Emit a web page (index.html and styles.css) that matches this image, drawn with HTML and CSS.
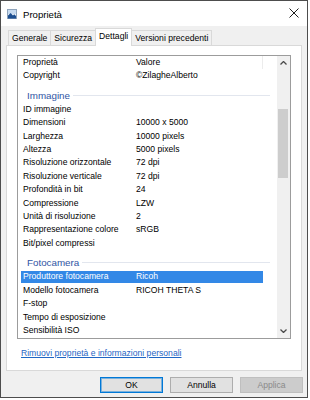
FILE: index.html
```
<!DOCTYPE html>
<html lang="it">
<head>
    <meta charset="UTF-8">
    <title>Proprietà</title>
    <link rel="stylesheet" href="styles.css">
</head>
<body>
    <div class="window">
        <div class="titlebar">
            <svg class="app-icon" width="10" height="10" viewBox="0 0 10 10">
                <rect x="0.5" y="0.5" width="9" height="9" fill="#f4f8fc" stroke="#8ea3bb"/>
                <rect x="1" y="1" width="8" height="4" fill="#c6daf0"/>
                <path d="M1 9.5 L1 6.5 L3.6 4 L6 6.4 L7.2 5.3 L9 7 L9 9.5 Z" fill="#1d4f91"/>
            </svg>
            <span class="title">Proprietà</span>
            <svg class="close" width="10" height="10" viewBox="0 0 10 10">
                <path d="M0.5 0.5 L9.5 9.5 M9.5 0.5 L0.5 9.5" stroke="#1e1e1e" stroke-width="1"/>
            </svg>
        </div>

        <div class="client">
            <div class="tabs">
                <div class="tab">Generale</div>
                <div class="tab">Sicurezza</div>
                <div class="tab active">Dettagli</div>
                <div class="tab">Versioni precedenti</div>
            </div>

            <div class="panel">
                <div class="listbox">
                    <div class="list-content">
                        <div class="row header">
                            <span class="cell-name">Proprietà</span>
                            <span class="cell-value">Valore</span>
                        </div>
                        <div class="row"><span class="cell-name">Copyright</span><span class="cell-value">©ZilagheAlberto</span></div>

                        <div class="group"><span>Immagine</span><i class="group-line"></i></div>
                        <div class="row"><span class="cell-name">ID immagine</span><span class="cell-value"></span></div>
                        <div class="row"><span class="cell-name">Dimensioni</span><span class="cell-value">10000 x 5000</span></div>
                        <div class="row"><span class="cell-name">Larghezza</span><span class="cell-value">10000 pixels</span></div>
                        <div class="row"><span class="cell-name">Altezza</span><span class="cell-value">5000 pixels</span></div>
                        <div class="row"><span class="cell-name">Risoluzione orizzontale</span><span class="cell-value">72 dpi</span></div>
                        <div class="row"><span class="cell-name">Risoluzione verticale</span><span class="cell-value">72 dpi</span></div>
                        <div class="row"><span class="cell-name">Profondità in bit</span><span class="cell-value">24</span></div>
                        <div class="row"><span class="cell-name">Compressione</span><span class="cell-value">LZW</span></div>
                        <div class="row"><span class="cell-name">Unità di risoluzione</span><span class="cell-value">2</span></div>
                        <div class="row"><span class="cell-name">Rappresentazione colore</span><span class="cell-value">sRGB</span></div>
                        <div class="row"><span class="cell-name">Bit/pixel compressi</span><span class="cell-value"></span></div>

                        <div class="group"><span>Fotocamera</span><i class="group-line"></i></div>
                        <div class="row selected"><span class="cell-name">Produttore fotocamera</span><span class="cell-value">Ricoh</span></div>
                        <div class="row"><span class="cell-name">Modello fotocamera</span><span class="cell-value">RICOH THETA S</span></div>
                        <div class="row"><span class="cell-name">F-stop</span><span class="cell-value"></span></div>
                        <div class="row"><span class="cell-name">Tempo di esposizione</span><span class="cell-value"></span></div>
                        <div class="row"><span class="cell-name">Sensibilità ISO</span><span class="cell-value"></span></div>
                    </div>

                    <div class="scrollbar">
                        <div class="scroll-arrow">
                            <svg width="7" height="4" viewBox="0 0 7 4"><polyline points="0.5,3.5 3.5,0.5 6.5,3.5" fill="none" stroke="#4a4a4a" stroke-width="1.3"/></svg>
                        </div>
                        <div class="scroll-track"><div class="scroll-thumb"></div></div>
                        <div class="scroll-arrow">
                            <svg width="7" height="4" viewBox="0 0 7 4"><polyline points="0.5,0.5 3.5,3.5 6.5,0.5" fill="none" stroke="#4a4a4a" stroke-width="1.3"/></svg>
                        </div>
                    </div>
                </div>

                <a class="remove-link" href="#">Rimuovi proprietà e informazioni personali</a>
            </div>

            <div class="buttons">
                <button class="btn default">OK</button>
                <button class="btn">Annulla</button>
                <button class="btn" disabled>Applica</button>
            </div>
        </div>
    </div>
</body>
</html>
```

FILE: styles.css
```
body {
    margin: 0;
    width: 310px;
    height: 400px;
    background: #ffffff;
    font-family: "Liberation Sans", Arial, sans-serif;
    font-size: 8.6px;
    color: #000;
}
.window {
    width: 308px;
    height: 398px;
    box-sizing: border-box;
    border: 1px solid #4d4d4d;
    display: flex;
    flex-direction: column;
    background: #fff;
}

/* title bar */
.titlebar {
    height: 25px;
    flex: none;
    display: flex;
    align-items: center;
    padding: 0 8px 0 6px;
    background: #fff;
}
.app-icon {
    margin-right: 6px;
    margin-top: 1px;
}
.title {
    font-size: 9.6px;
    flex: 1;
    margin-top: 2px;
}
.close {
    margin-top: -1px;
}

/* client area */
.client {
    flex: 1;
    background: #f0f0f0;
    padding: 0 5px;
    display: flex;
    flex-direction: column;
}
.tabs {
    height: 19px;
    display: flex;
    align-items: flex-end;
    padding-left: 2px;
}
.tab {
    height: 15px;
    box-sizing: border-box;
    border: 1px solid #d9d9d9;
    border-bottom: none;
    padding: 0 3px;
    margin-right: -1px;
    line-height: 14px;
    white-space: nowrap;
    background: #f0f0f0;
}
.tab.active {
    height: 18px;
    margin-bottom: -1px;
    background: #fff;
    position: relative;
    z-index: 1;
    line-height: 14px;
}
.panel {
    height: 326px;
    box-sizing: border-box;
    border: 1px solid #d9d9d9;
    background: #fff;
    padding: 9px 10px 0;
    display: flex;
    flex-direction: column;
}

/* details list */
.listbox {
    height: 284px;
    box-sizing: border-box;
    border: 1px solid #9c9c9c;
    display: flex;
    flex: none;
}
.list-content {
    flex: 1;
    overflow: hidden;
}
.row {
    display: flex;
    width: 242px;
    margin-left: 3px;
    line-height: 13.4px;
    white-space: nowrap;
}
.cell-name {
    width: 112px;
    padding-left: 2px;
    box-sizing: border-box;
    overflow: hidden;
}
.cell-value {
    flex: 1;
    padding-left: 3px;
}
.row.header .cell-value {
    border-right: 1px solid #ececec;
}
.row.selected {
    background: #3388e6;
    background-clip: content-box;
    padding: 1px 0;
    line-height: 11.4px;
    color: #fff;
}
.group {
    height: 20px;
    box-sizing: border-box;
    padding: 5px 7px 0 9px;
    display: flex;
    align-items: center;
    line-height: 13px;
    font-size: 9.8px;
    color: #2f55a4;
}
.group span {
    height: 13px;
}
.group-line {
    flex: 1;
    height: 1px;
    margin-left: 3px;
    background: #e2e6ee;
}

/* scrollbar */
.scrollbar {
    width: 13px;
    background: #f0f0f0;
    display: flex;
    flex-direction: column;
}
.scroll-arrow {
    height: 14px;
    display: flex;
    align-items: center;
    justify-content: center;
}
.scroll-track {
    flex: 1;
}
.scroll-thumb {
    width: 10px;
    height: 69px;
    margin: 39px 0 0 1px;
    background: #cdcdcd;
}

.remove-link {
    margin: 7.6px 0 0 4px;
    line-height: 13.4px;
    color: #1f66c4;
    text-decoration: underline;
    align-self: flex-start;
}

/* dialog buttons */
.buttons {
    display: flex;
    justify-content: flex-end;
    gap: 7px;
    margin: 6px -1px 0 0;
}
.btn {
    width: 63px;
    height: 16px;
    box-sizing: border-box;
    border: 1px solid #adadad;
    background: #e1e1e1;
    font-family: "Liberation Sans", Arial, sans-serif;
    font-size: 8.6px;
    color: #000;
    padding: 0;
}
.btn.default {
    border-color: #0078d7;
    box-shadow: inset 0 0 0 1px rgba(0, 120, 215, 0.45);
}
.btn:disabled {
    background: #cccccc;
    border-color: #bfbfbf;
    color: #8a8a8a;
}
```
